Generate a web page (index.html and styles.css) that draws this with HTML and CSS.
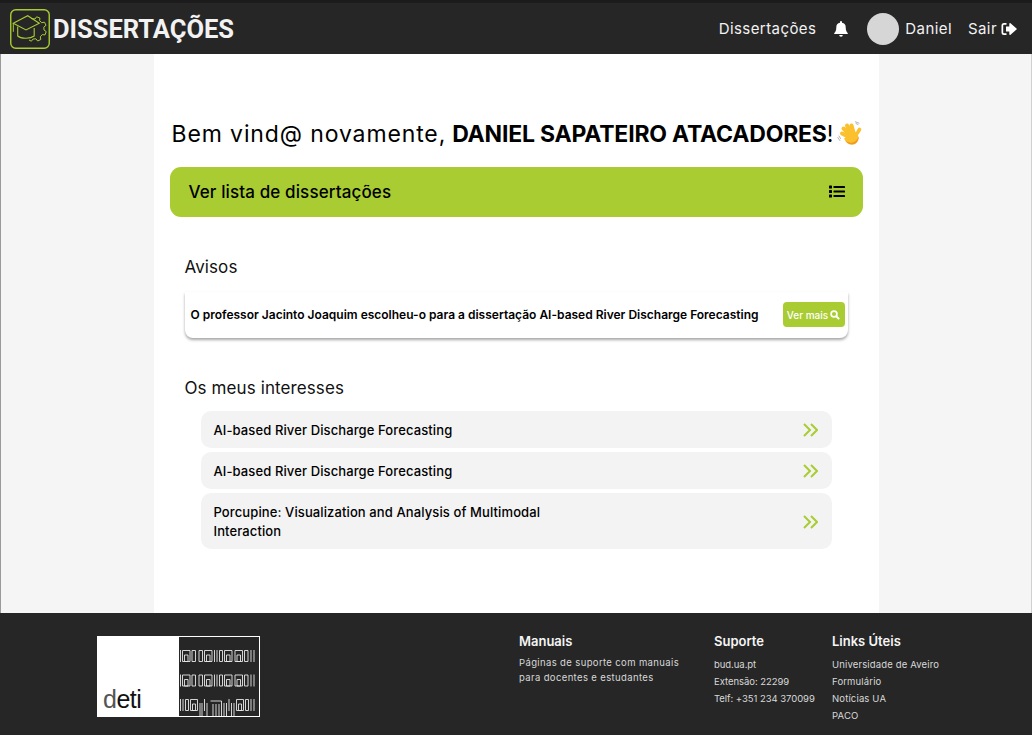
FILE: index.html
```html
<!DOCTYPE html>
<html lang="pt">
<head>
<meta charset="utf-8">
<title>Dissertações</title>
<link rel="stylesheet" href="styles.css">
</head>
<body>
<header class="topbar">
  <div class="brand">
    <svg class="brand-logo" viewBox="0 0 40 40" width="40" height="40" fill="none" stroke="#a9cc33">
      <rect x="0.75" y="0.75" width="38.5" height="38.5" rx="5" stroke-width="1.4"/>
      <path d="M21 9.500L25 10 26.600 7.800 29.900 9 29.600 11.700 31.800 13.700 34.500 13.200 36 16.300 33.800 18.100 34 21 36.200 22.600 35 25.900 32.300 25.600 30.300 27.800 30.800 30.500 27.700 32 25.900 29.800 23 30 21.400 32.200 19 31" stroke-width="1"/>
      <path d="M3.300 14.300L17.700 6.700 29.300 14.300 16 21z" stroke-width="1.100"/>
      <path d="M7.700 17.500v9.500c3 2.600 12 3.400 16.500 0v-8" stroke-width="1.100"/>
      <path d="M3.300 14.300v8.500" stroke-width="1"/>
    </svg>
    <span class="brand-name">DISSERTAÇÕES</span>
  </div>
  <nav class="nav">
    <a class="nav-link">Dissertações</a>
    <svg class="bell" viewBox="0 0 14 16" width="14" height="16" fill="#fff">
      <path d="M7 0a1 1 0 0 1 1 1v.7A4.600 4.600 0 0 1 11.700 6.300c0 3.500 1 4.700 2 5.700.3.400.1 1-.5 1H.8c-.6 0-.8-.6-.5-1 1-1 2-2.200 2-5.700A4.600 4.600 0 0 1 6 1.700V1a1 1 0 0 1 1-1z"/>
      <path d="M5.200 14h3.600a1.800 1.800 0 0 1-3.600 0z"/>
    </svg>
    <div class="user">
      <span class="avatar"></span>
      <a class="nav-link">Daniel</a>
    </div>
    <a class="nav-link exit">Sair
      <svg viewBox="0 0 16 14" width="16" height="14" fill="#fff">
        <path d="M5.500 1H3a2.500 2.500 0 0 0-2.500 2.500v7A2.500 2.500 0 0 0 3 13h2.500v-1.800H3a.8.8 0 0 1-.8-.8V3.600A.8.800 0 0 1 3 2.800h2.500z"/>
        <path d="M9.500 1.200l6 5.200a.8.8 0 0 1 0 1.200l-6 5.200c-.5.400-1.200.1-1.200-.6V9.500H5V4.500h3.300V1.800c0-.7.700-1 1.200-.6z"/>
      </svg>
    </a>
  </nav>
</header>

<main class="page">
  <div class="content">
    <h1 class="welcome"><span class="welcome-lead">Bem vind@ novamente,</span> <strong>DANIEL SAPATEIRO ATACADORES</strong><span>!</span>
      <svg class="wave" viewBox="0 0 26 26" width="26" height="26" fill="none" stroke-linecap="round">
        <path d="M19 2.500l2 1M18.500 .8l3.500 1.400M2 15l1.500 2.500M.8 16.500l2 3" stroke="#9aa0a6" stroke-width=".8"/>
        <g stroke="#fbc02d" stroke-width="4">
          <path d="M14 17L5 12.500M14 15L6.500 7.500M15 14L10 4.500M17 13L14.500 4.500"/>
          <path d="M18 15l3-4 1.500-2.500" stroke-width="3.600"/>
        </g>
        <path d="M21 14c1 5-1.500 9-5 9.500-4 .5-7-2-9-6 1 0 9-9 10-8z" fill="#fbc02d"/>
        <path d="M22 15c0 5-3 8.500-7 8.500-3 0-5-1.500-7-4 3 2 6 3 9 1.500 2.500-1.200 4-3.500 5-6z" fill="#f19a20"/>
      </svg>
    </h1>
    <a class="cta">
      <span>Ver lista de dissertações</span>
      <svg viewBox="0 0 16 13" width="16" height="13" fill="#000">
        <rect x="0" y="0.500" width="3" height="3" rx=".6"/><rect x="0" y="5" width="3" height="3" rx=".6"/><rect x="0" y="9.500" width="3" height="3" rx=".6"/>
        <rect x="4.500" y="1.100" width="11.500" height="1.800" rx=".5"/><rect x="4.500" y="5.600" width="11.500" height="1.800" rx=".5"/><rect x="4.500" y="10.100" width="11.500" height="1.800" rx=".5"/>
      </svg>
    </a>

    <section class="notices">
      <h2 class="section-title">Avisos</h2>
      <div class="notice">
        <p>O professor Jacinto Joaquim escolheu-o para a dissertação AI-based River Discharge Forecasting</p>
        <a class="more">Ver mais
          <svg viewBox="0 0 12 12" width="10" height="10" fill="none" stroke="#fff"><circle cx="4.800" cy="4.800" r="3.500" stroke-width="2"/><path d="M7.500 7.500L11 11" stroke-width="2.400"/></svg>
        </a>
      </div>
    </section>

    <section class="interests">
      <h2 class="section-title">Os meus interesses</h2>
      <ul class="list">
        <li class="item"><span>AI-based River Discharge Forecasting</span>
          <svg viewBox="0 0 15 14" width="15" height="14" fill="none" stroke="#a9cc33" stroke-width="2"><path d="M1 1l6 6-6 6M8 1l6 6-6 6"/></svg></li>
        <li class="item"><span>AI-based River Discharge Forecasting</span>
          <svg viewBox="0 0 15 14" width="15" height="14" fill="none" stroke="#a9cc33" stroke-width="2"><path d="M1 1l6 6-6 6M8 1l6 6-6 6"/></svg></li>
        <li class="item"><span>Porcupine: Visualization and Analysis of Multimodal<br>Interaction</span>
          <svg viewBox="0 0 15 14" width="15" height="14" fill="none" stroke="#a9cc33" stroke-width="2"><path d="M1 1l6 6-6 6M8 1l6 6-6 6"/></svg></li>
      </ul>
    </section>
  </div>
</main>

<footer class="footer">
  <div class="deti">
    <div class="deti-left"><span><i>d</i>eti</span></div>
    <svg class="deti-right" viewBox="0 0 80 79" width="80" height="79" fill="none" stroke="#e8e8e8" stroke-width=".9">
      <defs>
        <g id="band">
          <path d="M1.500 0v12M3.500 .5h7.500v11h-7.500zM5.500 5h3.500v6.500h-3.500zM13 .5h3.500v11h-3.500zM20 .5h3.500v11h-3.500zM25.500 .5h7.500v11h-7.500zM27.500 5h3.500v6.500h-3.500zM35.500 0v12M38 0v12M40.500 .5h3v11h-3zM45.500 .5h7.500v11h-7.500zM47.500 5h3.500v6.500h-3.500zM56 .5h7.500v11h-7.500zM58 5h3.500v6.500h-3.500zM65.500 .5h3.500v11h-3.500zM72 0v12M75 0v12"/>
        </g>
      </defs>
      <use href="#band" x="0" y="13"/>
      <use href="#band" x="0" y="37.500"/>
      <path d="M1.500 62v12M4 62v12M6.500 62.500h3v11h-3zM11.500 62.500h7v11h-7zM13.500 67h3v6.500h-3zM21 66v13M23 66v13M25.500 62v12M28 66v13M31.500 64h11v15M34 67v12M37 67v12M40 67v12M45 66v13M47.500 66v13M50 62v12M52.500 66v13M55 66v13M57.500 62.500h7v11h-7zM59.500 67h3v6.500h-3zM66.500 62.500h3v11h-3zM72 62v12M75 62v12"/>
    </svg>
  </div>
  <div class="foot-cols">
    <div class="foot-col col-a">
      <h3>Manuais</h3>
      <p class="tight">Páginas de suporte com manuais<br>para docentes e estudantes</p>
    </div>
    <div class="foot-col col-b">
      <h3>Suporte</h3>
      <p>bud.ua.pt</p><p>Extensão: 22299</p><p>Telf: +351 234 370099</p>
    </div>
    <div class="foot-col col-c">
      <h3>Links Úteis</h3>
      <p>Universidade de Aveiro</p><p>Formulário</p><p>Notícias UA</p><p>PACO</p>
    </div>
  </div>
</footer>
</body>
</html>
```

FILE: styles.css
```css
* { box-sizing: border-box; }
html, body { height: 100%; margin: 0; }
body {
  display: flex;
  flex-direction: column;
  height: 735px;
  overflow: hidden;
  font-family: "Inter", "Open Sans", sans-serif;
  color: #000;
  background: #f5f5f5;
}
.topbar {
  flex: none;
  height: 54px;
  border-top: 3px solid #1c1c1c;
  background: #262626;
  display: flex;
  align-items: center;
  justify-content: space-between;
  padding: 0 15px 0 10px;
}
.brand { display: flex; align-items: center; gap: 3px; }
.brand-logo { display: block; }
.brand-name {
  font-family: "Roboto", sans-serif;
  font-weight: 700;
  font-size: 25.500px;
  color: #f2f2f2;
}
.nav { display: flex; align-items: center; color: #fff; }
.nav-link { font-size: 15px; letter-spacing: .42px; color: #f2f2f2; }
.bell { margin: 0 19px 0 18px; display: block; }
.user { display: flex; align-items: center; gap: 6px; margin-right: 16px; }
.avatar { width: 32px; height: 32px; border-radius: 50%; background: #d6d6d6; display: block; }
.exit { display: flex; align-items: center; gap: 4px; }
.page {
  flex: 1;
  display: flex;
  justify-content: center;
  border-left: 1px solid #9a9a9a;
  border-right: 1px solid #d0d0d0;
  min-height: 0;
}
.content {
  width: 725px;
  background: #fff;
  padding: 0 16px;
}
.welcome {
  margin: 66px 0 0;
  height: 28px;
  font-size: 23px;
  line-height: 28px;
  font-weight: 400;
  white-space: nowrap;
  padding-left: 2px;
  display: flex;
  align-items: center;
}
.welcome-lead { letter-spacing: .88px; }
.welcome strong { font-weight: 700; margin-left: 6px; letter-spacing: -.2px; }
.wave { display: block; flex: none; margin-left: 4px; }
.cta {
  margin-top: 18.500px;
  height: 50px;
  background: #a9cc33;
  border-radius: 11px;
  display: flex;
  align-items: center;
  justify-content: space-between;
  padding: 0 18px 0 19px;
  font-size: 17px;
  letter-spacing: .12px;
  font-weight: 500;
}
.notices { margin: 39.500px 0 0; padding: 0 15px; }
.section-title {
  margin: 0;
  font-size: 17px;
  letter-spacing: .1px;
  line-height: 22px;
  font-weight: 400;
  color: #111;
}
.notice {
  margin-top: 14px;
  height: 46px;
  display: flex;
  align-items: center;
  justify-content: space-between;
  padding: 0 3px 1px 6px;
  background: #fff;
  border-radius: 0 0 8px 8px;
  box-shadow: 0 2px 3px rgba(0,0,0,.35);
}
.notice p { margin: 0; font-size: 12px; font-weight: 600; white-space: nowrap; }
.more {
  width: 62px;
  height: 25px;
  background: #a9cc33;
  border-radius: 4px;
  color: #fff;
  font-size: 10px;
  font-weight: 500;
  display: flex;
  align-items: center;
  justify-content: center;
  gap: 2px;
}
.interests { margin-top: 39px; padding: 0 15px; }
.list { list-style: none; margin: 12px 0 0; padding: 0 16px; display: flex; flex-direction: column; gap: 4px; }
.item {
  min-height: 37px;
  background: #f3f3f3;
  border-radius: 10px;
  display: flex;
  align-items: center;
  justify-content: space-between;
  padding: 9.500px 14px 8.500px 13px;
  font-size: 13px;
  letter-spacing: .11px;
  line-height: 19px;
  font-weight: 500;
}
.footer {
  flex: none;
  height: 122px;
  background: #262626;
  display: flex;
  align-items: flex-start;
  color: #e6e6e6;
  padding: 0 0 0 97px;
}
.deti {
  width: 163px;
  height: 81px;
  margin-top: 23px;
  display: flex;
  border: 1px solid #fff;
  background: #fff;
}
.deti-left {
  width: 81px;
  display: flex;
  align-items: flex-end;
  padding: 0 0 3px 5px;
  color: #111;
  font-family: "Liberation Sans", sans-serif;
  font-size: 25px;
  line-height: 28px;
  letter-spacing: -.5px;
}
.deti-left i { font-style: normal; color: #555; }
.deti-right { background: #262626; display: block; }
.foot-cols { display: flex; margin: 18px 0 0 259px; }
.foot-col { width: 118px; }
.foot-col h3 { margin: 0 0 5px; font-size: 13px; line-height: 20px; font-weight: 600; color: #f5f5f5; }
.foot-col p { margin: 0; font-size: 9.500px; line-height: 17px; color: #d8d8d8; white-space: nowrap; }
.foot-col p.tight { line-height: 14.500px; margin-top: 3px; letter-spacing: .37px; }
.col-a { width: 195px; }
.col-b p { letter-spacing: -.05px; }
.col-c p { letter-spacing: .15px; }
```
